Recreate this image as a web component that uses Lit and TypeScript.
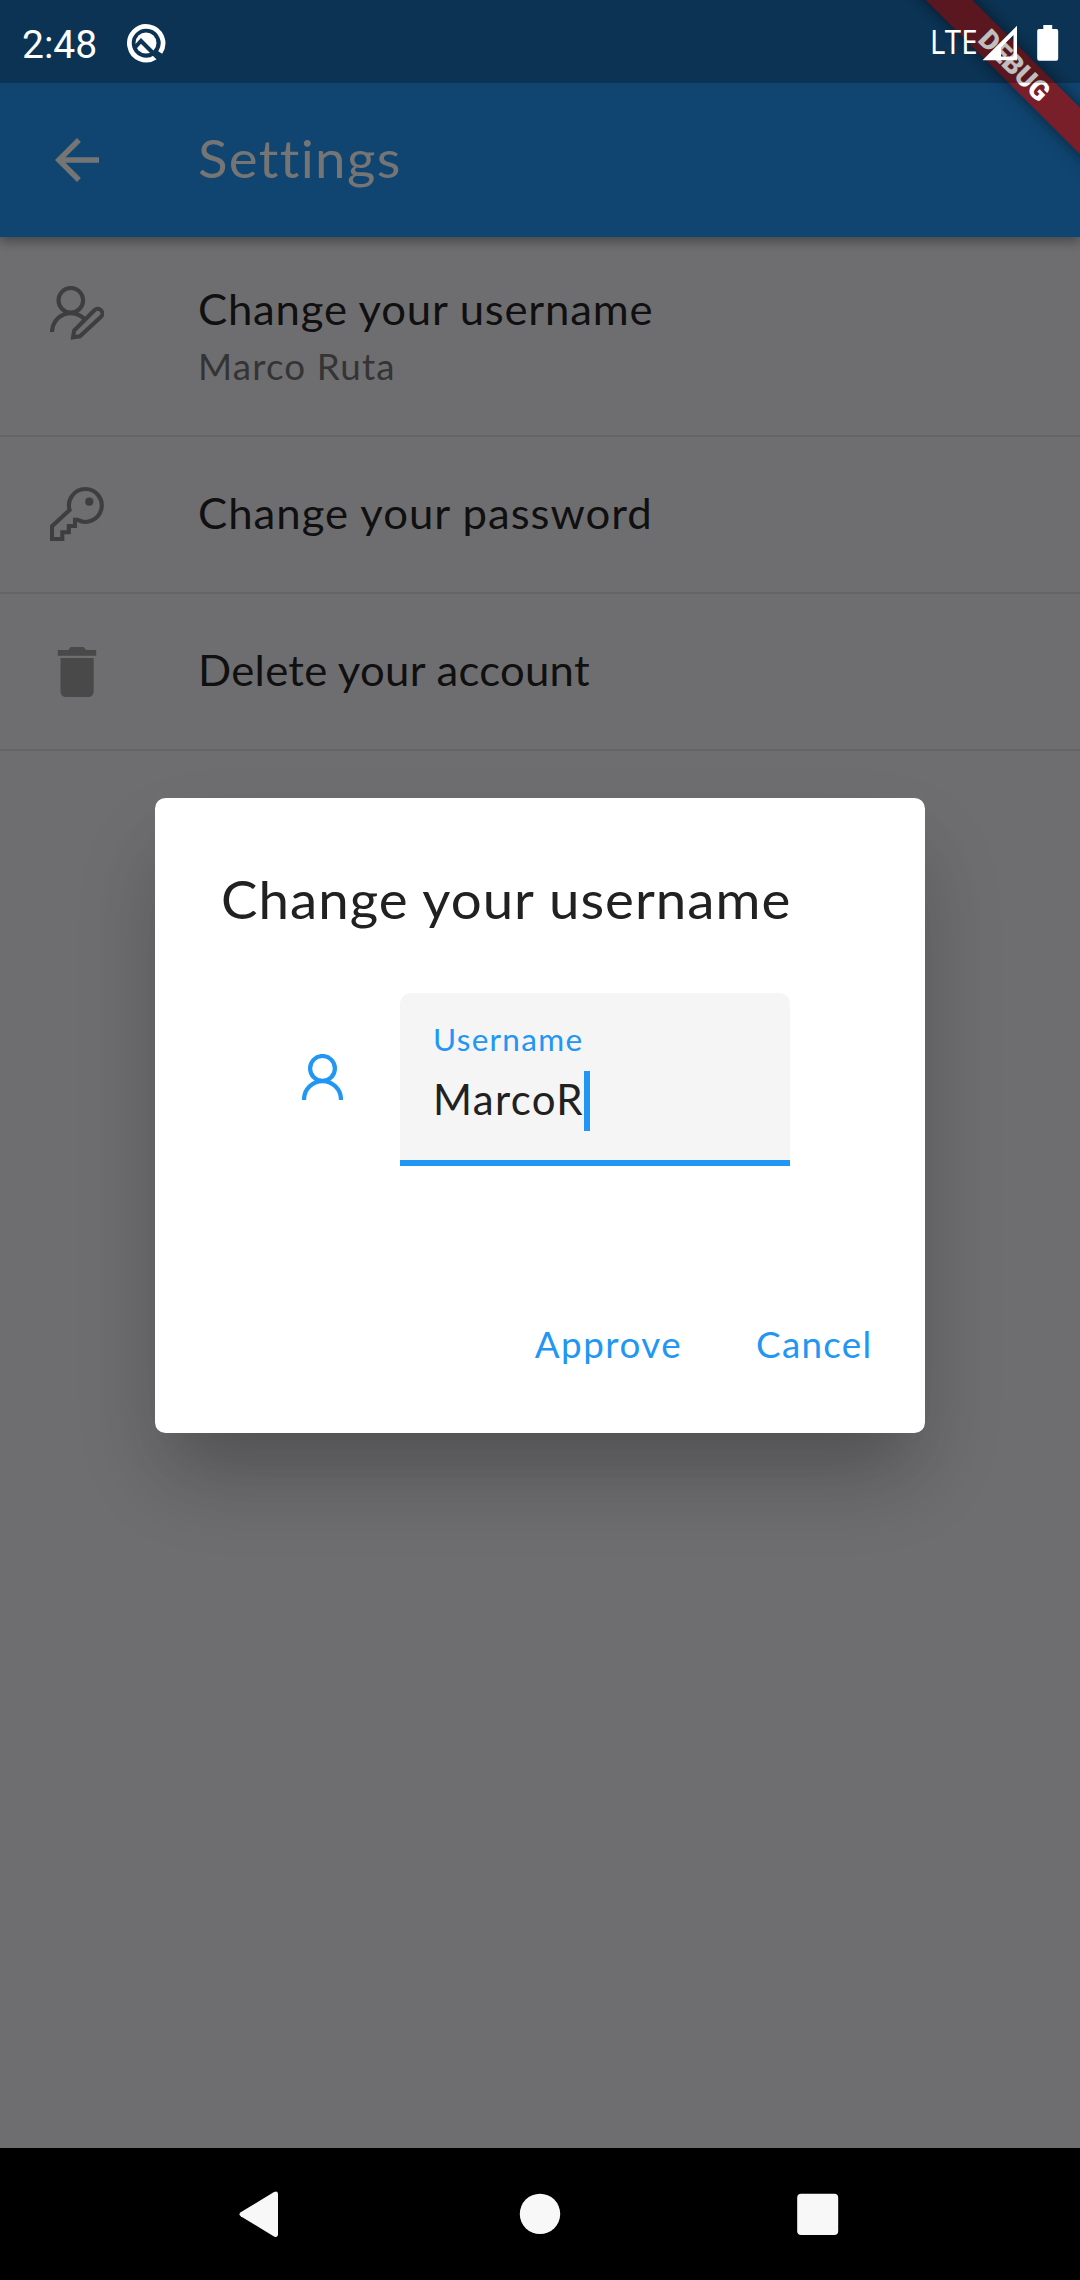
import { LitElement, html, css, svg } from "lit";
import { customElement, property } from "lit/decorators.js";

const icons: Record<string, { w: number; h: number; body: unknown }> = {
  userEdit: {
    w: 54,
    h: 54,
    body: svg`<g fill="none" stroke="#3e3e3f" stroke-width="4.1">
      <circle cx="20.8" cy="14.3" r="12.3"/>
      <path d="M2 46A18.8 18.8 0 0 1 35 33.6"/>
      <path d="M23 51.3L24.2 44.6L44.4 24.2A4.6 4.6 0 0 1 51 30.7L30 50.2Z"/></g>`,
  },
  key: {
    w: 54,
    h: 54,
    body: svg`<path fill="none" stroke="#3e3e3f" stroke-width="4.1" d="M19.6 23L2 39.3V52H12.3V45.3H18.8V39H25V32.9H27.6A16.4 16.4 0 1 0 19.6 23Z"/>
      <circle cx="39.3" cy="14.7" r="4.1" fill="#3e3e3f"/>`,
  },
  trash: {
    w: 54,
    h: 54,
    body: svg`<path fill="#49494a" d="M7.8 6H18.2L20.8 3H33.5L36 6H46.2V11.7H7.8ZM10.5 14H43.7V47.5A5.5 5.5 0 0 1 38.2 53H16A5.5 5.5 0 0 1 10.5 47.5Z"/>`,
  },
};

@customElement("setting-row")
class SettingRow extends LitElement {
  @property() icon = "key";
  @property() heading = "";
  @property() detail = "";
  static styles = css`
    :host {
      display: flex;
      box-sizing: border-box;
      width: 1080px;
      height: 157px;
      padding: 50px 50px 0;
      border-bottom: 2px solid #656567;
      font-family: Lato, "Open Sans", sans-serif;
    }
    :host([detail]:not([detail=""])) { height: 200px; padding-top: 49px; }
    svg { flex: none; width: 54px; height: 54px; margin-right: 94px; }
    .texts { display: flex; flex-direction: column; white-space: nowrap; }
    .heading { font-size: 42px; line-height: 50px; color: #101011; margin-top: 1px; transform: scaleX(1.04); transform-origin: 0 0; }
    .detail { font-size: 36.75px; line-height: 44px; color: #343435; margin-top: 10px; letter-spacing: 1.15px; }
    .userEdit .heading { letter-spacing: 0.75px; margin-top: -2px; }
    .key .heading { letter-spacing: 0.97px; }
    .trash .heading { letter-spacing: 0.27px; }
  `;
  render() {
    const i = icons[this.icon];
    return html`<svg viewBox="0 0 ${i.w} ${i.h}">${i.body}</svg>
      <div class="texts ${this.icon}">
        <span class="heading">${this.heading}</span>
        ${this.detail ? html`<span class="detail">${this.detail}</span>` : ""}
      </div>`;
  }
}

@customElement("username-dialog")
class UsernameDialog extends LitElement {
  static styles = css`
    :host {
      display: flex;
      flex-direction: column;
      box-sizing: border-box;
      width: 770px;
      height: 635.5px;
      border-radius: 10.5px;
      background: #fff;
      font-family: Lato, "Open Sans", sans-serif;
      white-space: nowrap;
      box-shadow: 0 50px 70px -18px rgba(0, 0, 0, 0.2), 0 46px 94px rgba(0, 0, 0, 0.09);
    }
    .title { margin: 69px 0 0 66px; font-size: 52.5px; line-height: 64px; color: #212121; letter-spacing: 1px; transform: scaleX(1.04); transform-origin: 0 0; }
    .entry { display: flex; margin: 62.5px 0 0 147px; }
    .user { width: 41px; height: 46px; margin: 61px 57px 0 0; flex: none; }
    .field {
      display: flex;
      flex-direction: column;
      box-sizing: border-box;
      width: 390px;
      height: 173px;
      padding: 27px 0 0 33px;
      background: #f5f5f5;
      border-bottom: 6px solid #2196f3;
      border-radius: 10.5px 10.5px 0 0;
    }
    .label { font-size: 31.5px; line-height: 38px; color: #2196f3; letter-spacing: 1.3px; }
    .value { display: flex; align-items: center; height: 60px; margin-top: 13px; font-size: 42px; color: #212121; letter-spacing: 1.35px; }
    .typed { line-height: 50px; padding-bottom: 4px; }
    .caret { width: 6px; height: 60px; background: #2196f3; }
    .actions { display: flex; justify-content: flex-end; gap: 74px; margin: 155.5px 52.5px 0 0; font-size: 36.75px; line-height: 44px; color: #2196f3; }
    .approve { letter-spacing: 1.5px; }
    .cancel { letter-spacing: 1.3px; }
  `;
  render() {
    return html`<div class="title">Change your username</div>
      <div class="entry">
        <svg class="user" viewBox="0 0 41 46"><g fill="none" stroke="#2196f3" stroke-width="4.2">
          <circle cx="20.5" cy="14.4" r="12.4"/>
          <path d="M2 46V45.6A18.5 18.5 0 0 1 39 45.6V46"/></g></svg>
        <div class="field">
          <div class="label">Username</div>
          <div class="value"><span class="typed">MarcoR</span><span class="caret"></span></div>
        </div>
      </div>
      <div class="actions"><span class="approve">Approve</span><span class="cancel">Cancel</span></div>`;
  }
}

@customElement("app-root")
class AppRoot extends LitElement {
  static styles = css`
    :host { display: block; }
    .screen {
      position: relative;
      display: flex;
      flex-direction: column;
      width: 1080px;
      height: 2280px;
      overflow: hidden;
      background: #6e6e70;
      font-family: Lato, "Open Sans", sans-serif;
      white-space: nowrap;
    }
    .top {
      display: flex;
      align-items: center;
      box-sizing: border-box;
      height: 237px;
      padding: 83px 0 0 55px;
      background: #104571;
      color: #757575;
      box-shadow: 0 5px 10px rgba(0, 0, 0, 0.26), 0 1px 14px rgba(0, 0, 0, 0.12);
    }
    .back { width: 44px; height: 44px; margin-right: 99px; }
    .name { font-size: 52.5px; line-height: 64px; padding-bottom: 4px; letter-spacing: 1.3px; transform: scaleX(1.04); transform-origin: 0 0; }
    .list { flex: 1; }
    .nav { display: flex; align-items: center; justify-content: space-between; height: 132px; background: #000; padding: 0 240px; }
    .nav svg { width: 42px; height: 46px; overflow: visible; }
    .overlay { position: absolute; left: 155px; top: 797.5px; }
    .banner {
      position: absolute;
      left: 864px;
      top: 49px;
      width: 301px;
      height: 33px;
      transform: rotate(45deg);
      background: #791f2a;
      box-shadow: 0 0 16px rgba(0, 0, 0, 0.5);
      color: #fff;
      font: 900 27.5px/33px Roboto, sans-serif;
      text-align: center;
    }
    .status {
      position: absolute;
      left: 0;
      top: 0;
      display: flex;
      box-sizing: border-box;
      width: 1080px;
      height: 83px;
      padding: 0 21px 0 22px;
      background: rgba(0, 0, 0, 0.25);
      color: #fff;
      font-family: Roboto, sans-serif;
    }
    .time { font-size: 39px; line-height: 46px; margin-top: 21.5px; }
    .q { width: 40px; height: 40px; margin: 23px 0 0 29px; }
    .grow { flex: 1; }
    .lte { width: 52px; font: 33px/40px "Noto Sans", sans-serif; margin-top: 22px; transform: scaleX(0.89); transform-origin: 0 0; }
    .signal { width: 36px; height: 36px; margin: 25px 19px 0 0; }
    .battery { width: 22px; height: 36px; margin-top: 25px; }
  `;
  render() {
    return html`<div class="screen">
      <div class="top">
        <svg class="back" viewBox="4 4 16 16"><path fill="#757575" d="M20 11H7.83l5.59-5.59L12 4l-8 8 8 8 1.41-1.41L7.83 13H20v-2z"/></svg>
        <span class="name">Settings</span>
      </div>
      <div class="list">
        <setting-row icon="userEdit" heading="Change your username" detail="Marco Ruta"></setting-row>
        <setting-row icon="key" heading="Change your password"></setting-row>
        <setting-row icon="trash" heading="Delete your account"></setting-row>
      </div>
      <div class="nav">
        <svg viewBox="0 0 42 46"><path fill="#f8f8f8" d="M.7 21.3L34 1.1Q38 -.9 38 3V43.3Q38 47.3 34 45.4L.7 25.3Q-1.6 23.3 .7 21.3Z"/></svg>
        <svg viewBox="0 0 42 46"><circle cx="21" cy="22.9" r="20.2" fill="#f8f8f8"/></svg>
        <svg viewBox="0 0 42 46"><rect x="-.8" y="2.8" width="41" height="41.2" rx="4" fill="#f8f8f8"/></svg>
      </div>
      <username-dialog class="overlay"></username-dialog>
      <div class="banner">DEBUG</div>
      <div class="status">
        <span class="time">2:48</span>
        <svg class="q" viewBox="0 0 40 40">
          <path fill="none" stroke="#fff" stroke-width="4.7" d="M29.5 34.2A16.8 16.8 0 1 1 34.2 29.5"/>
          <circle cx="20" cy="20" r="10.5" fill="#fff"/>
          <path fill="none" stroke="#0c3454" stroke-width="4" d="M8 25.5L15 18L33 36"/>
        </svg>
        <span class="grow"></span>
        <span class="lte">LTE</span>
        <svg class="signal" viewBox="0 0 36 36"><path fill="#fff" fill-rule="evenodd" d="M.5 35.2L35 .7V35.2ZM19 22.5V31.5H31.5V10Z"/></svg>
        <svg class="battery" viewBox="0 0 22 36"><path fill="#fff" d="M6.3 0H15.2V4H19.5Q21.2 4 21.2 6V33.5Q21.2 35.7 19.2 35.7H2.2Q.2 35.7 .2 33.5V6Q.2 4 2 4H6.3Z"/></svg>
      </div>
    </div>`;
  }
}
